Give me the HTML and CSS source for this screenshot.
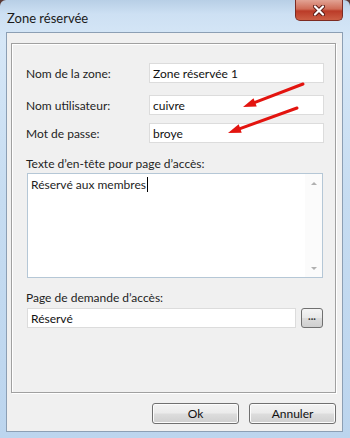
FILE: index.html
```html
<!DOCTYPE html>
<html lang="fr">

<head>
    <meta charset="UTF-8">
    <meta name="viewport" content="width=device-width, initial-scale=1.0">
    <title>Zone réservée</title>
    <link rel="stylesheet" href="styles.css">
</head>

<body>
    <div class="window">
        <div class="titlebar">
            <span class="title">Zone réservée</span>
            <button class="close" type="button" aria-label="Fermer">
                <svg width="12" height="11" viewBox="0 0 12 11">
                    <path d="M2 1.5 L10 9.5 M10 1.5 L2 9.5" stroke="#5a1a14" stroke-width="4" stroke-linecap="round" />
                    <path d="M2 1.5 L10 9.5 M10 1.5 L2 9.5" stroke="#fff" stroke-width="2.2" stroke-linecap="round" />
                </svg>
            </button>
        </div>

        <div class="client">
            <div class="group">
                <div class="row first">
                    <label for="zone">Nom de la zone:</label>
                    <input type="text" id="zone" value="Zone réservée 1">
                </div>
                <div class="row second">
                    <label for="user">Nom utilisateur:</label>
                    <input type="text" id="user" value="cuivre">
                </div>
                <div class="row third">
                    <label for="pass">Mot de passe:</label>
                    <input type="text" id="pass" value="broye">
                </div>

                <div class="caption">Texte d’en-tête pour page d’accès:</div>
                <div class="memo">
                    <div class="memo-text"><span class="caret">Réservé aux membres</span></div>
                    <div class="scrollbar">
                        <span class="arrow up"></span>
                        <span class="arrow down"></span>
                    </div>
                </div>

                <div class="caption page">Page de demande d’accès:</div>
                <div class="browse">
                    <input type="text" value="Réservé">
                    <button type="button" class="dots">...</button>
                </div>
            </div>

            <div class="actions">
                <button type="button" class="btn">Ok</button>
                <button type="button" class="btn">Annuler</button>
            </div>
        </div>

        <!-- flèches rouges -->
        <svg class="arrows" width="350" height="438" viewBox="0 0 350 438">
            <line x1="303" y1="84" x2="255" y2="102.4" stroke="#e3140f" stroke-width="3" stroke-linecap="round" />
            <polygon points="243,107 256.7,106.5 253.5,98.2" fill="#e3140f" />
            <line x1="297" y1="108" x2="240" y2="128.6" stroke="#e3140f" stroke-width="3" stroke-linecap="round" />
            <polygon points="228,133 241.7,132.8 238.7,124.3" fill="#e3140f" />
        </svg>
    </div>
</body>

</html>
```

FILE: styles.css
```css
body {
    margin: 0;
    padding: 0;
    width: 350px;
    height: 438px;
    overflow: hidden;
    background-color: #5a3a36;
    font-family: Lato, "Liberation Sans", Arial, sans-serif;
    font-size: 12px;
    color: #1e1e1e;
}

.window {
    position: relative;
    box-sizing: border-box;
    height: 438px;
    display: flex;
    flex-direction: column;
    padding: 0 7px 6px 6px;
    border-radius: 6px 6px 0 0;
    background: linear-gradient(180deg, #b8cfe6 0%, #cde0f3 14px, #d6e7f7 40px, #c6dcf1 200px, #bcd5ee 438px);
}

.titlebar {
    height: 32px;
    display: flex;
    align-items: flex-start;
}

.title {
    margin-top: 10px;
    margin-left: 1px;
    font-size: 13px;
    color: #1a1a1a;
}

.close {
    margin-left: auto;
    width: 48px;
    height: 21px;
    padding: 0;
    border: 1px solid #7c2b22;
    border-top: none;
    border-radius: 0 0 5px 5px;
    background: linear-gradient(180deg, #e2a394 0%, #cf6c57 45%, #bb3b28 55%, #cc5e44 100%);
    display: flex;
    align-items: center;
    justify-content: center;
}

.client {
    flex: 1;
    display: flex;
    flex-direction: column;
    background-color: #f0f0f0;
    border: 1px solid #8c9fb4;
    padding: 10px 6px 7px 4px;
}

.group {
    box-sizing: border-box;
    height: 350px;
    padding: 19px 11px 0 14px;
    border: 1px solid #a0a0a0;
    box-shadow: inset 1px 1px 0 #fff, 1px 1px 0 #fff;
}

.row {
    display: grid;
    grid-template-columns: 123px 175px;
    align-items: center;
}

.second {
    margin-top: 12px;
}

.third {
    margin-top: 8px;
}

.row label {
    padding-top: 1px;
}

input {
    box-sizing: border-box;
    height: 20px;
    margin: 0;
    padding: 0 3px;
    border: 1px solid #dcdcdc;
    background-color: #fff;
    font-family: inherit;
    font-size: 12px;
    color: #111;
}

.caption {
    line-height: 16px;
    margin-top: 13px;
    margin-bottom: 1px;
}

.caption.page {
    margin-top: 12px;
    margin-bottom: 2px;
}

.memo {
    box-sizing: border-box;
    width: 296px;
    height: 105px;
    margin-left: 1px;
    display: flex;
    border: 1px solid #b5c7d6;
    background-color: #fff;
}

.memo-text {
    flex: 1;
    padding: 3px 3px;
    line-height: 16px;
}

.caret {
    border-right: 1px solid #000;
    padding-right: 1px;
}

.scrollbar {
    width: 17px;
    display: flex;
    flex-direction: column;
    justify-content: space-between;
    align-items: center;
    padding: 8px 0 7px;
    background-color: #fbfbfb;
}

.arrow {
    width: 0;
    height: 0;
    border-left: 3px solid transparent;
    border-right: 3px solid transparent;
}

.arrow.up {
    border-bottom: 3px solid #b0b0b0;
}

.arrow.down {
    border-top: 3px solid #b0b0b0;
}

.browse {
    display: flex;
    align-items: center;
    gap: 5px;
    margin-left: 1px;
}

.browse input {
    width: 269px;
}

.dots {
    box-sizing: border-box;
    width: 22px;
    height: 20px;
    padding: 0 0 4px;
    border: 1px solid #707070;
    border-radius: 3px;
    background: linear-gradient(180deg, #f4f4f4 0%, #e8e8e8 50%, #dcdcdc 51%, #cfcfcf 100%);
    font-family: inherit;
    font-size: 11px;
    font-weight: bold;
    color: #333;
    line-height: 10px;
}

.actions {
    margin-top: 10px;
    display: flex;
    justify-content: flex-end;
    gap: 10px;
}

.btn {
    box-sizing: border-box;
    width: 87px;
    height: 21px;
    padding: 0;
    border: 1px solid #707070;
    border-radius: 3px;
    background: linear-gradient(180deg, #f3f3f3 0%, #ebebeb 48%, #dddddd 52%, #cfcfcf 100%);
    box-shadow: inset 0 0 0 1px #fcfcfc;
    font-family: inherit;
    font-size: 12px;
    color: #111;
}

.arrows {
    position: absolute;
    left: 0;
    top: 0;
    pointer-events: none;
}
```
